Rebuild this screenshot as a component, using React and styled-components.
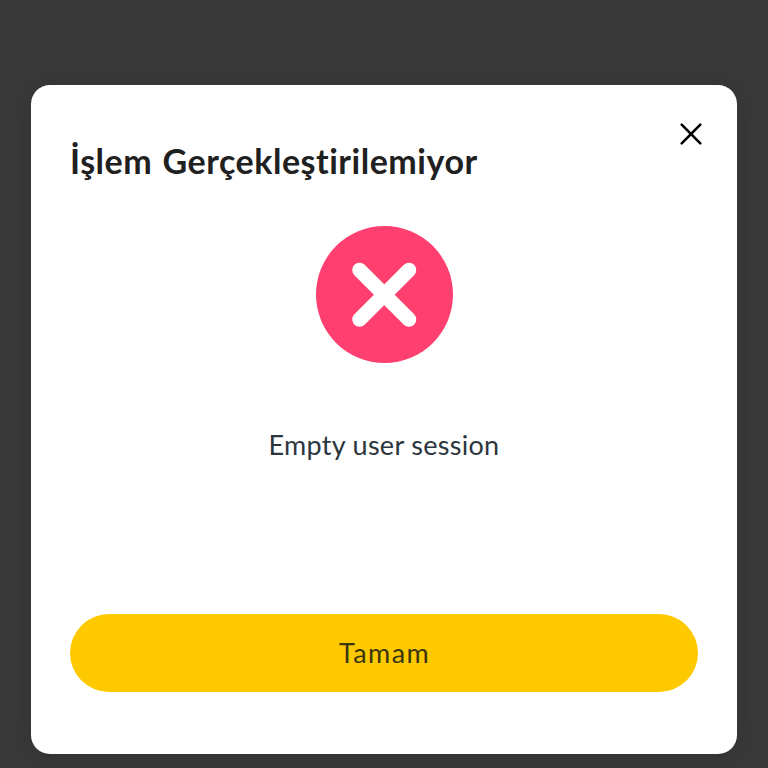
import React from 'react'
import styled, { createGlobalStyle } from 'styled-components'

const GlobalStyle = createGlobalStyle`
  * {
    box-sizing: border-box;
  }
  body {
    margin: 0;
    background: #393939;
    font-family: Lato, 'Open Sans', sans-serif;
  }
`

const Backdrop = styled.div`
  height: 100vh;
  overflow: hidden;
  padding: 85px 31px 0;
  background: #393939;
`

const Modal = styled.section`
  display: flex;
  flex-direction: column;
  height: 669px;
  padding: 37px 39px 62px;
  border-radius: 19px;
  background: #fff;
  box-shadow: 0 2px 24px rgba(0, 0, 0, 0.15);
`

const Header = styled.header`
  display: flex;
  align-items: flex-start;
  justify-content: space-between;
  height: 103.5px;
  margin-right: -4.5px;
`

const Title = styled.h1`
  margin: 18px 0 0;
  color: #202020;
  font-size: 34px;
  font-weight: 700;
  line-height: 42px;
  letter-spacing: 0.52px;
  word-spacing: 1.5px;
  white-space: nowrap;
`

const CloseButton = styled.button`
  display: flex;
  padding: 0;
  border: 0;
  background: none;
  color: #000;
`

const StatusIcon = styled.svg`
  display: block;
  align-self: center;
  width: 137px;
  height: 137px;
`

const Message = styled.p`
  margin: 65px 0 0;
  color: #2c3640;
  font-size: 27px;
  line-height: 34px;
  letter-spacing: 0.3px;
  text-align: center;
`

const ConfirmButton = styled.button`
  height: 78px;
  margin-top: auto;
  padding: 0 0 0 1px;
  border: 0;
  border-radius: 39px;
  background: #ffc900;
  color: #3b350f;
  font-family: inherit;
  font-size: 27px;
  line-height: 34px;
  letter-spacing: 1.4px;
`

const App = () => (
  <>
    <GlobalStyle />
    <Backdrop>
      <Modal role="dialog" aria-labelledby="modal-title">
        <Header>
          <Title id="modal-title">İşlem Gerçekleştirilemiyor</Title>
          <CloseButton aria-label="Kapat">
            <svg width="24" height="24" viewBox="0 0 24 24" fill="none">
              <path d="M2.7 2.7l18.6 18.6M21.3 2.7L2.7 21.3" stroke="currentColor" strokeWidth="2.6" strokeLinecap="round" />
            </svg>
          </CloseButton>
        </Header>
        <StatusIcon viewBox="0 0 137 137" fill="none">
          <circle cx="68.5" cy="68.5" r="68.5" fill="#ff3f70" />
          <path d="M43.5 44l49.5 49.5M93 44L43.5 93.5" stroke="#fff" strokeWidth="14.5" strokeLinecap="round" />
        </StatusIcon>
        <Message>Empty user session</Message>
        <ConfirmButton>Tamam</ConfirmButton>
      </Modal>
    </Backdrop>
  </>
)

export default App
